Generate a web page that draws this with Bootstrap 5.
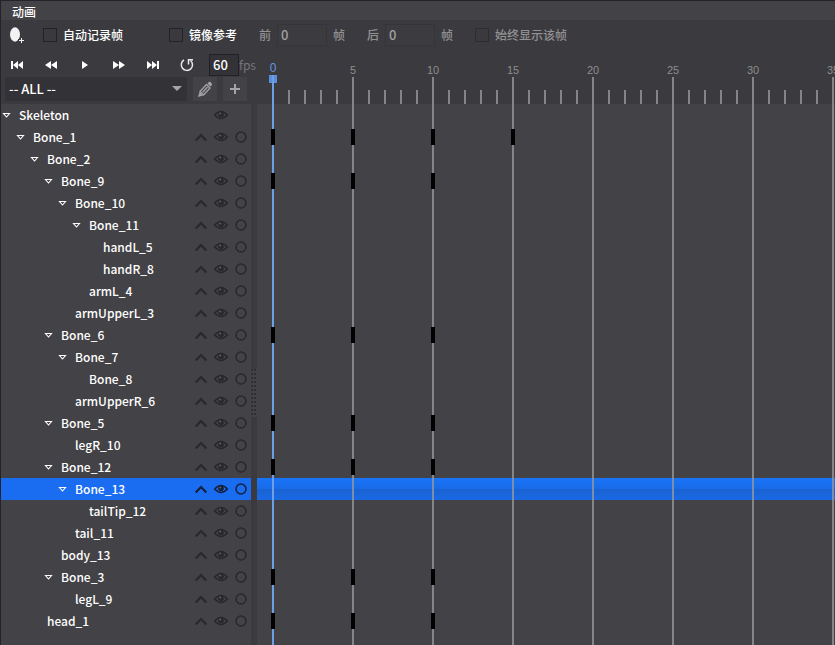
<!DOCTYPE html>
<html lang="zh-CN">
<head>
<meta charset="utf-8">
<meta name="viewport" content="width=device-width, initial-scale=1">
<title>动画</title>
<link href="https://cdn.jsdelivr.net/npm/bootstrap@5.3.0/dist/css/bootstrap.min.css" rel="stylesheet">
<style>
  :root { --bar: #3b3a3e; --panel: #434246; --line: #858585; --cursor: #6c9fe6; --ink: #29282b; }
  body { font: 12px/22px "Noto Sans CJK SC", sans-serif; background: var(--bar); color: #fff; overflow: hidden; }
  .app::after { content: ""; position: absolute; inset: 0; border: solid #242328; border-width: 1px 0 0 1px; pointer-events: none; }
  .title-bar { background: var(--panel); line-height: 20px; height: 20px; padding: 2px 12px 0; font-weight: 500; }
  .options { height: 30px; padding-left: 6px; font-weight: 500; }
  .options label { line-height: 22px; }
  .dimmed { color: #929194; }
  .tick-box { appearance: none; width: 14px; height: 14px; margin: 0 6px 0 0; border: 1px solid #232226; background: #3a393d; flex: none; }
  .dimmed .tick-box { border-color: #2d2c30; }
  .num-box { width: 50px; height: 22px; border: 1px solid #353438; background: #3c3b3f; color: #a3a2a5; padding: 0 3px; margin: 0 6px; font-size: 13px; font-weight: 500; border-radius: 0; }
  .gap-box { margin-right: 46px; }
  .gap-group { margin-left: 22px; }
  .fps-box { width: 30px; height: 22px; border: 1px solid #222125; background: #333236; color: #fff; font-size: 13px; font-weight: 500; padding: 0 3px; margin-left: 5px; }
  .fps-unit { color: #77767a; }
  .icon-btn { border: 0; padding: 0; background: none; color: inherit; display: flex; align-items: center; justify-content: center; flex: none; }
  .side { width: 251px; flex: none; }
  .transport { height: 27px; padding-top: 4px; }
  .transport .icon-btn { width: 34px; height: 22px; }
  .filter { height: 27px; padding-left: 5px; gap: 6px; }
  .filter select { appearance: none; width: 182px; height: 24px; border: 0; border-radius: 0; background: #333236; color: #fff; font: 500 13px/24px "Noto Sans CJK SC", sans-serif; padding: 0 4px; }
  .filter .drop::after { content: ""; position: absolute; right: 5px; top: 9px; border: 5px solid transparent; border-top-color: #a5a4a7; border-bottom: 0; }
  .filter .icon-btn { width: 24px; height: 24px; background: var(--panel); color: #a5a4a7; }
  .tree { background: var(--panel); }
  .bone { height: 22px; font-weight: 500; white-space: nowrap; }
  .bone .icon-btn { width: 20px; height: 22px; color: var(--ink); }
  .bone .fold { width: 13px; color: #fff; }
  .lead-0 { padding-left: 0; } .lead-1 { padding-left: 14px; } .lead-2 { padding-left: 28px; }
  .lead-3 { padding-left: 42px; } .lead-4 { padding-left: 56px; } .lead-5 { padding-left: 70px; } .lead-6 { padding-left: 84px; }
  .bone-name { padding-left: 6px; }
  .no-fold { padding-left: 19px; }
  .bone.picked { background: #1a6df0; }
  .bone.picked .icon-btn:not(.fold) { color: #14213a; }
  .splitter { width: 6px; flex: none; margin-top: 54px; padding-top: 36px; background: #3b3a3e; }
  .grip { width: 6px; height: 48px; background: var(--panel) radial-gradient(circle at 1px 1px, #2f2e32 1px, transparent 1px) 0 0 / 3px 4px; }
  .timeline { min-width: 0; }
  .ruler { height: 54px; padding-left: 8px; color: #8d8d8d; font: 11px/14px "Liberation Sans", sans-serif; }
  .frame-cell { width: 16px; flex: none; display: flex; flex-direction: column; align-items: center; justify-content: flex-end; }
  .frame-cell::after { content: ""; width: 2px; height: 14px; background: var(--line); flex: none; }
  .frame-cell.major::after { height: 27px; }
  .frame-cell.now { color: #6296e4; font-size: 12px; }
  .frame-cell.now::after { width: 8px; height: 29px; background: linear-gradient(90deg, transparent 3px, var(--cursor) 3px 5px, transparent 5px), linear-gradient(#5b8fdc, #5b8fdc) top / 100% 8px no-repeat; }
  .tracks { background: linear-gradient(var(--cursor), var(--cursor)) 15px 0 / 2px 100% no-repeat, linear-gradient(90deg, var(--line) 2px, transparent 2px) 15px 0 / 80px 100% var(--panel); }
  .track { height: 22px; padding-left: 8px; }
  .track.picked { background: linear-gradient(var(--cursor), var(--cursor)) 15px 0 / 2px 100% no-repeat, linear-gradient(90deg, #7d8eaa 2px, transparent 2px) 15px 0 / 80px 100%, linear-gradient(#1a73f8 0, #196be8 50%, #1962d0 50%, #1969e6 100%); }
  .slot { width: 16px; flex: none; display: flex; align-items: center; justify-content: center; }
  .slot.keyed::before { content: ""; width: 4px; height: 16px; background: #000; }
</style>
<script src="https://cdn.jsdelivr.net/npm/bootstrap@5.3.0/dist/js/bootstrap.bundle.min.js"></script>
</head>
<body>
<div class="app vh-100 d-flex flex-column position-relative">
  <header class="title-bar">动画</header>
  <div class="options d-flex align-items-center">
    <button class="icon-btn me-3" type="button" aria-label="洋葱皮"><svg width="21" height="22" viewBox="0 0 21 22"><ellipse cx="9" cy="10.500" rx="5" ry="7.200" fill="#f2f2f2"/><path d="M15.500 13v7M12 16.500h7" stroke="#3b3a3e" stroke-width="3"/><path d="M15.500 14v5M13 16.500h5" stroke="#f2f2f2"/></svg></button>
    <div class="gap-box d-flex align-items-center"><input class="tick-box" type="checkbox" id="auto"><label for="auto">自动记录帧</label></div>
    <div class="d-flex align-items-center"><input class="tick-box" type="checkbox" id="mirror"><label for="mirror">镜像参考</label></div>
    <div class="dimmed gap-group d-flex align-items-center">
      <label for="before">前</label><input class="num-box" id="before" value="0" disabled><span>帧</span>
      <label class="gap-group" for="after">后</label><input class="num-box" id="after" value="0" disabled><span>帧</span>
      <input class="tick-box gap-group" type="checkbox" id="always" disabled><label for="always">始终显示该帧</label>
    </div>
  </div>
  <main class="d-flex flex-grow-1" style="min-height:0">
    <section class="side d-flex flex-column">
      <div class="transport d-flex text-nowrap">
        <button class="icon-btn" type="button" aria-label="第一帧"><svg width="34" height="22" fill="#fff"><path d="M11 7h2v8h-2zM18 7v8l-5-4zM23 7v8l-5-4z"/></svg></button>
        <button class="icon-btn" type="button" aria-label="上一帧"><svg width="34" height="22" fill="#fff"><path d="M17 7v8l-6-4zM23 7v8l-6-4z"/></svg></button>
        <button class="icon-btn" type="button" aria-label="播放"><svg width="34" height="22" fill="#fff"><path d="M14 7v8l6-4z"/></svg></button>
        <button class="icon-btn" type="button" aria-label="下一帧"><svg width="34" height="22" fill="#fff"><path d="M11 7v8l6-4zM17 7v8l6-4z"/></svg></button>
        <button class="icon-btn" type="button" aria-label="最后一帧"><svg width="34" height="22" fill="#fff"><path d="M11 7v8l5-4zM16 7v8l5-4zM21 7h2v8h-2z"/></svg></button>
        <button class="icon-btn" type="button" aria-label="循环"><svg width="34" height="22" fill="none" stroke="#e8e8e8" stroke-width="1.500"><path d="M14 6a5.600 5.600 0 1 0 6.500 0.500"/><path d="M18.500 10.500V5.700H23"/></svg></button>
        <input class="fps-box" id="fps" value="60"><label class="fps-unit" for="fps">fps</label>
      </div>
      <div class="filter d-flex">
        <div class="drop position-relative"><select aria-label="骨骼过滤"><option>-- ALL --</option></select></div>
        <button class="icon-btn" type="button" aria-label="编辑"><svg width="24" height="24" fill="none" stroke="#a5a4a7" stroke-width="1.300"><path d="M7 14.500l6.500-7 3.500 3.500-6.500 7z"/><path d="M9.500 15.500l5-5.500"/><path d="M5 20l1.500-5 3.500 3.500zM14.500 6.500L16 5q1-.5 2 .5t1 2.500l-1.500 1.500z" fill="#a5a4a7" stroke="none"/></svg></button>
        <button class="icon-btn" type="button" aria-label="添加"><svg width="24" height="24"><path d="M12 7v10M7 12h10" stroke="#a5a4a7" stroke-width="2"/></svg></button>
      </div>
      <div class="tree flex-grow-1" id="tree" role="tree"></div>
    </section>
    <div class="splitter d-flex align-items-center"><div class="grip"></div></div>
    <section class="timeline flex-grow-1 d-flex flex-column overflow-hidden" id="timeline">
      <div class="ruler d-flex" id="ruler"></div>
      <div class="tracks flex-grow-1" id="tracks"></div>
    </section>
  </main>
</div>
<script>
  // name, depth, has children, keyed frames
  const bones = [
    ["Skeleton", 0, 1, []], ["Bone_1", 1, 1, [0, 5, 10, 15]], ["Bone_2", 2, 1, []], ["Bone_9", 3, 1, [0, 5, 10]],
    ["Bone_10", 4, 1, []], ["Bone_11", 5, 1, []], ["handL_5", 6, 0, []], ["handR_8", 6, 0, []],
    ["armL_4", 5, 0, []], ["armUpperL_3", 4, 0, []], ["Bone_6", 3, 1, [0, 5, 10]], ["Bone_7", 4, 1, []],
    ["Bone_8", 5, 0, []], ["armUpperR_6", 4, 0, []], ["Bone_5", 3, 1, [0, 5, 10]], ["legR_10", 4, 0, []],
    ["Bone_12", 3, 1, [0, 5, 10]], ["Bone_13", 4, 1, []], ["tailTip_12", 5, 0, []], ["tail_11", 4, 0, []],
    ["body_13", 3, 0, []], ["Bone_3", 3, 1, [0, 5, 10]], ["legL_9", 4, 0, []], ["head_1", 2, 0, [0, 5, 10]]
  ];
  const picked = "Bone_13";
  const button = (label, art, cls = "") => `<button class="icon-btn ${cls}" type="button" aria-label="${label}">${art}</button>`;
  const fold = '<svg width="13" height="22"><path d="M3.500 9.500h6l-3 3.500z" fill="none" stroke="#fff" stroke-width="1.100"/></svg>';
  const curve = '<svg width="20" height="22"><path d="M4.700 14.500l5.300-5.500 5.300 5.500" fill="none" stroke="currentColor" stroke-width="2.200"/></svg>';
  const eye = '<svg width="20" height="22"><path d="M3.700 11q6.300-7 12.600 0-6.300 7-12.600 0z" fill="none" stroke="currentColor" stroke-width="1.400"/><circle cx="10" cy="10.500" r="2.800" fill="currentColor"/><circle cx="9.200" cy="9.500" r="0.900" fill="#656468"/></svg>';
  const ring = '<svg width="20" height="22"><circle cx="10" cy="11" r="5" fill="none" stroke="currentColor" stroke-width="1.500"/></svg>';

  document.getElementById("tree").innerHTML = bones.map(([name, depth, open]) =>
    `<div class="bone d-flex lead-${depth} ${name === picked ? "picked" : ""}" role="treeitem" aria-level="${depth + 1}">` +
    (open ? button("折叠", fold, "fold") : "") +
    `<span class="${open ? "bone-name" : "no-fold"} flex-grow-1">${name}</span>` +
    (depth ? button("曲线", curve) : "") + button("显示", eye) + (depth ? button("锁定", ring) : '<span class="icon-btn"></span>') +
    `</div>`).join("");

  document.getElementById("tracks").innerHTML = bones.map(([name, , , keys]) =>
    `<div class="track d-flex ${name === picked ? "picked" : ""}">` +
    [...Array(16).keys()].map(f => `<div class="slot ${keys.includes(f) ? "keyed" : ""}"></div>`).join("") + `</div>`).join("");

  // The ruler shows as many frames as the timeline has room for.
  function drawRuler() {
    const count = Math.ceil((document.getElementById("timeline").clientWidth - 8) / 16);
    document.getElementById("ruler").innerHTML = [...Array(count).keys()].map(f =>
      `<div class="frame-cell ${f % 5 ? "" : "major"} ${f ? "" : "now"}">${f % 5 ? "" : `<span>${f}</span>`}</div>`).join("");
  }
  drawRuler();
  window.addEventListener("resize", drawRuler);
</script>
</body>
</html>
